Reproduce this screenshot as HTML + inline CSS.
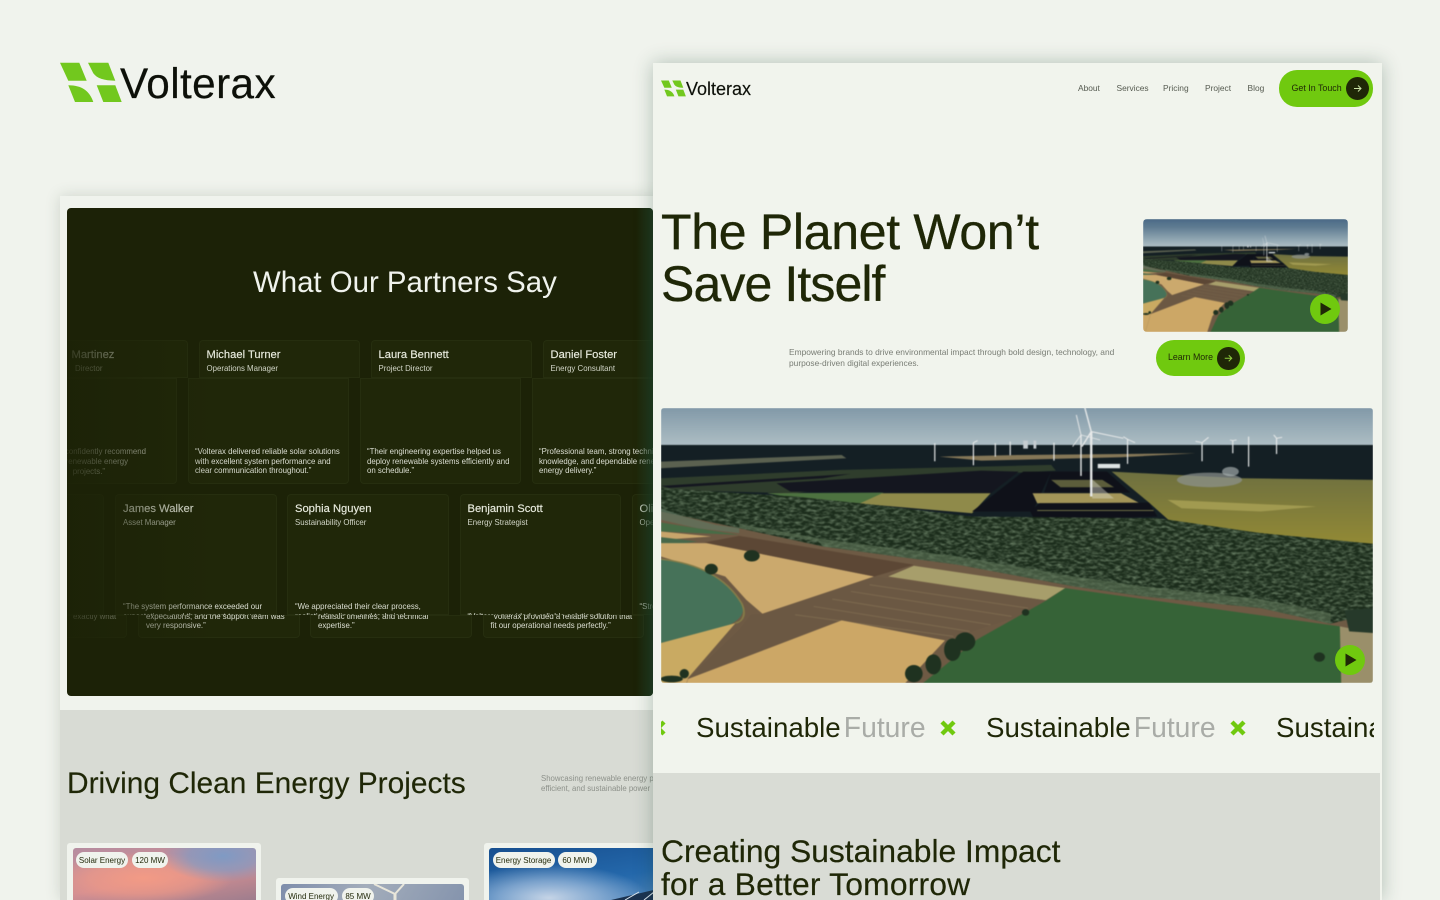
<!DOCTYPE html>
<html lang="en">
<head>
<meta charset="utf-8">
<title>Volterax</title>
<style>
html,body{margin:0;padding:0;width:1440px;height:900px;overflow:hidden;background:#f0f3ed}
body{position:relative;font-family:"Liberation Sans",sans-serif;color:#1f2707}
.a{position:absolute}
.t{position:absolute;white-space:nowrap;line-height:1}
#left{position:absolute;left:60px;top:196px;width:600px;height:704px;background:#f0f3ed;box-shadow:0 0 14px rgba(50,70,50,.18)}
#clip{position:absolute;left:0;top:0;width:1440px;height:900px;clip-path:inset(208px 787px 204px 67px round 4px);background:#1c2207}
.s{position:absolute;background:#202709;box-shadow:inset 0 0 0 1px #262e0f;overflow:hidden}
.u{border-radius:4px 4px 0 0}
.l{border-radius:0 0 4px 4px}
.n{position:absolute;white-space:nowrap;font-size:11.2px;line-height:1;color:#e9ecdf;-webkit-text-stroke:.15px #e9ecdf}
.r{position:absolute;white-space:nowrap;font-size:7.85px;line-height:1;color:#d2d6c8}
.q{position:absolute;white-space:nowrap;font-size:7.85px;line-height:9.7px;color:#dcdfd3}
.q2{position:absolute;white-space:nowrap;font-size:7.85px;line-height:1;color:#dcdfd3}
#grey{position:absolute;left:60px;top:710px;width:600px;height:190px;background:#d8dbd4}
.pc{position:absolute;background:#f0f3ed;border-radius:3px}
.pi{position:absolute;border-radius:3px;overflow:hidden}
.chip{position:absolute;height:16.5px;border-radius:9px;background:#f0f3ed;font-size:8px;line-height:17.5px;text-align:center;color:#1f2707;white-space:nowrap}
#right{position:absolute;left:653px;top:63px;width:729px;height:837px;background:#f1f4ed;box-shadow:0 0 18px rgba(30,70,50,.3)}
.nav{position:absolute;top:84px;font-size:8.4px;line-height:1;color:#555a50;white-space:nowrap}
.btn{position:absolute;background:#70c90f;border-radius:18px}
.dot{position:absolute;border-radius:50%;background:#1f2707}
.play{position:absolute;width:30px;height:30px;border-radius:50%;background:#70c90f}
.mq{position:absolute;font-size:27.7px;line-height:28px;white-space:nowrap;color:#1f2707;word-spacing:-4.6px}
.mq span{color:#a9aca7;font-size:28.3px}
.ph{filter:blur(.45px)}
</style>
</head>
<body>

<!-- big logo -->
<svg class="a" style="left:60px;top:62px" width="62" height="41" viewBox="60 62 62 41">
<g fill="#72c81e">
<path d="M60 62.7H79.3L86.7 80.7H68.3Z"/>
<path d="M88 62.7H108.3L115.3 80.7C104 80.7 97 78.5 93.3 73.3Z"/>
<path d="M68.3 85.3C82 85.3 89.5 91 93.3 102H75Z"/>
<path d="M96.7 85.3H115.3L121.7 102H103.3Z"/>
</g>
</svg>
<div class="t" style="left:120px;top:61px;font-size:42.3px;line-height:46px;letter-spacing:.4px;color:#0d1009;-webkit-text-stroke:.2px #0d1009">Volterax</div>

<!-- left mockup -->
<div id="left"></div>
<div id="clip">
  <div class="t" style="left:253px;top:266px;font-size:29.4px;line-height:33px;color:#f0f3ed">What Our Partners Say</div>

  <!-- row 1 upper -->
  <div class="s u" style="left:27px;top:340px;width:161px;height:38px"><div class="n" style="left:44.5px;top:9.5px">Martinez</div><div class="r" style="left:48px;top:25px">Director</div></div>
  <div class="s u" style="left:199px;top:340px;width:161px;height:38px"><div class="n" style="left:7.5px;top:9.5px">Michael Turner</div><div class="r" style="left:7.5px;top:25px">Operations Manager</div></div>
  <div class="s u" style="left:371px;top:340px;width:161px;height:38px"><div class="n" style="left:7.5px;top:9.5px">Laura Bennett</div><div class="r" style="left:7.5px;top:25px">Project Director</div></div>
  <div class="s u" style="left:543px;top:340px;width:161px;height:38px"><div class="n" style="left:7.5px;top:9.5px">Daniel Foster</div><div class="r" style="left:7.5px;top:25px">Energy Consultant</div></div>
  <!-- row 1 lower -->
  <div class="s l" style="left:16px;top:378px;width:161px;height:106px">
    <div class="q2" style="right:31px;top:70px">confidently recommend</div>
    <div class="q2" style="right:49px;top:80px">renewable energy</div>
    <div class="q2" style="right:72px;top:90px">projects.”</div>
  </div>
  <div class="s l" style="left:188px;top:378px;width:161px;height:106px"><div class="q" style="left:7px;top:69px">“Volterax delivered reliable solar solutions<br>with excellent system performance and<br>clear communication throughout.”</div></div>
  <div class="s l" style="left:360px;top:378px;width:161px;height:106px"><div class="q" style="left:7px;top:69px">“Their engineering expertise helped us<br>deploy renewable systems efficiently and<br>on schedule.”</div></div>
  <div class="s l" style="left:532px;top:378px;width:161px;height:106px"><div class="q" style="left:7px;top:69px">“Professional team, strong technical<br>knowledge, and dependable renewable<br>energy delivery.”</div></div>

  <!-- row 2 upper -->
  <div class="s u" style="left:-57px;top:494px;width:161px;height:121px"></div>
  <div class="s u" style="left:115px;top:494px;width:162px;height:121px"><div class="n" style="left:8px;top:9.5px">James Walker</div><div class="r" style="left:8px;top:25px">Asset Manager</div><div class="q" style="left:8px;top:108px">“The system performance exceeded our<br>expectations, and the support team was<br>very responsive.”</div></div>
  <div class="s u" style="left:287px;top:494px;width:162px;height:121px"><div class="n" style="left:8px;top:9.5px">Sophia Nguyen</div><div class="r" style="left:8px;top:25px">Sustainability Officer</div><div class="q" style="left:8px;top:108px">“We appreciated their clear process,<br>realistic timelines, and technical<br>expertise.”</div></div>
  <div class="s u" style="left:460px;top:494px;width:161px;height:121px"><div class="n" style="left:7.5px;top:9.5px">Benjamin Scott</div><div class="r" style="left:7.5px;top:25px">Energy Strategist</div><div class="q" style="left:7.5px;top:118px">“Volterax provided a reliable solution that<br>fit our operational needs perfectly.”</div></div>
  <div class="s u" style="left:632px;top:494px;width:161px;height:121px"><div class="n" style="left:7.5px;top:9.5px">Oliver Grant</div><div class="r" style="left:7.5px;top:25px">Operations Lead</div><div class="q" style="left:7.5px;top:108px">“Strong project delivery</div></div>
  <!-- row 2 lower -->
  <div class="s l" style="left:-34px;top:615px;width:161px;height:23px"><div class="q2" style="left:107px;top:-2.5px">exactly what</div></div>
  <div class="s l" style="left:138px;top:615px;width:162px;height:23px"><div class="q" style="left:8px;top:-13px">“The system performance exceeded our<br>expectations, and the support team was<br>very responsive.”</div></div>
  <div class="s l" style="left:310px;top:615px;width:162px;height:23px"><div class="q" style="left:8px;top:-13px">“We appreciated their clear process,<br>realistic timelines, and technical<br>expertise.”</div></div>
  <div class="s l" style="left:483px;top:615px;width:161px;height:23px"><div class="q" style="left:7.5px;top:-3.3px">“Volterax provided a reliable solution that<br>fit our operational needs perfectly.”</div></div>

  <!-- fades -->
  <div class="a" style="left:67px;top:330px;width:150px;height:320px;background:linear-gradient(90deg,rgba(28,34,7,.9),rgba(28,34,7,.55) 40%,rgba(28,34,7,0))"></div>
  <div class="a" style="left:636px;top:208px;width:18px;height:488px;background:linear-gradient(90deg,rgba(28,44,20,0),rgba(28,56,32,.85))"></div>
</div>

<!-- grey section -->
<div id="grey"></div>
<div class="t" style="left:67px;top:766px;font-size:29.9px;line-height:35px;color:#1f2707;-webkit-text-stroke:.15px #1f2707">Driving Clean Energy Projects</div>
<div class="t" style="left:541px;top:773.5px;font-size:7.8px;line-height:10px;color:#8d918a">Showcasing renewable energy projects<br>efficient, and sustainable power</div>

<div class="pc" style="left:67px;top:843px;width:194px;height:57px;border-radius:3px 3px 0 0"></div>
<div class="pi" style="left:72.6px;top:848px;width:183px;height:52px;border-radius:3px 3px 0 0;background:
  radial-gradient(ellipse 62px 26px at 150px 8px,#7f9ac4 0,rgba(127,154,196,.7) 55%,rgba(127,154,196,0) 100%),
  radial-gradient(ellipse 90px 26px at 70px 30px,#f29a85 0,rgba(242,154,133,.6) 60%,rgba(242,154,133,0) 100%),
  linear-gradient(170deg,#b58da0,#d48f92 55%,#9e7d8d)"></div>
<div class="chip" style="left:76px;top:851.7px;width:52px">Solar Energy</div>
<div class="chip" style="left:132px;top:851.7px;width:36px">120 MW</div>

<div class="pc" style="left:275.5px;top:878px;width:193px;height:22px;border-radius:3px 3px 0 0"></div>
<div class="pi" style="left:281px;top:884px;width:183px;height:16px;border-radius:3px 3px 0 0;background:linear-gradient(120deg,#7d8dab,#a3adbb 45%,#8594ad)">
  <svg class="a" style="left:0;top:0" width="183" height="16" viewBox="0 0 183 16"><g stroke="#e8e6da" stroke-width="2" fill="none"><path d="M114 10L93 0"/><path d="M114 10L123 0"/><path d="M114 10V30" stroke-width="3"/></g></svg>
</div>
<div class="chip" style="left:284.6px;top:887.7px;width:53px">Wind Energy</div>
<div class="chip" style="left:342px;top:887.7px;width:32px">85 MW</div>

<div class="pc" style="left:483.6px;top:843px;width:194px;height:57px;border-radius:3px 3px 0 0"></div>
<div class="pi" style="left:489px;top:848px;width:190px;height:52px;border-radius:3px 3px 0 0;background:
  radial-gradient(ellipse 100px 34px at 60px 50px,#c5d4e6 0,rgba(170,195,224,.65) 50%,rgba(170,195,224,0) 100%),
  linear-gradient(170deg,#174f8f,#2468ab 60%,#4f86bb)">
  <svg class="a" style="left:0;top:0" width="190" height="52" viewBox="0 0 190 52"><path d="M122 52L190 36V52Z" fill="#1b3350"/><path d="M150 44L136 52M170 40L155 52" stroke="#dce6ee" stroke-width="1"/></svg>
</div>
<div class="chip" style="left:492.5px;top:851.7px;width:62px">Energy Storage</div>
<div class="chip" style="left:558px;top:851.7px;width:38.5px">60 MWh</div>

<!-- right mockup -->
<div id="right"></div>
<svg class="a" style="left:661px;top:80px" width="25" height="17" viewBox="60 62 62 41">
<g fill="#72c81e">
<path d="M60 62.7H79.3L86.7 80.7H68.3Z"/>
<path d="M88 62.7H108.3L115.3 80.7C104 80.7 97 78.5 93.3 73.3Z"/>
<path d="M68.3 85.3C82 85.3 89.5 91 93.3 102H75Z"/>
<path d="M96.7 85.3H115.3L121.7 102H103.3Z"/>
</g>
</svg>
<div class="t" style="left:686px;top:78.5px;font-size:18px;line-height:20px;color:#0d1009;-webkit-text-stroke:.15px #0d1009">Volterax</div>

<div class="nav" style="left:1078px">About</div>
<div class="nav" style="left:1116.5px">Services</div>
<div class="nav" style="left:1163px">Pricing</div>
<div class="nav" style="left:1205px">Project</div>
<div class="nav" style="left:1247.5px">Blog</div>
<div class="btn" style="left:1279px;top:70px;width:94px;height:36.5px"></div>
<div class="t" style="left:1291.5px;top:84.3px;font-size:8.9px;color:#1f2707">Get In Touch</div>
<div class="dot" style="left:1346px;top:77px;width:23px;height:23px"></div>
<svg class="a" style="left:1346px;top:77px" width="23" height="23" viewBox="-11.5 -11.5 23 23"><path d="M-3.5 0H3.5M0.5-3L3.5 0L0.5 3" fill="none" stroke="#c9e2a5" stroke-width="1"/></svg>

<div class="t" style="left:661px;top:206px;font-size:50px;line-height:52px;letter-spacing:-.3px;color:#1f2707;-webkit-text-stroke:.35px #1f2707">The Planet Won’t<br><span style="letter-spacing:-.9px">Save Itself</span></div>

<div class="a" style="left:1143px;top:219px;width:205px;height:113px;border-radius:4px;overflow:hidden">
<svg class="ph" width="205" height="113" viewBox="12 -151.5 1530 1177" preserveAspectRatio="none" style="display:block"><use href="#photo"/></svg>
</div>
<div class="play" style="left:1310px;top:294px"></div>
<svg class="a" style="left:1310px;top:294px" width="30" height="30" viewBox="0 0 30 30"><path d="M10.5 8.5L21.5 15L10.5 21.5Z" fill="#1f2707"/></svg>

<div class="t" style="left:789px;top:346.5px;font-size:8.39px;line-height:11px;color:#797d75">Empowering brands to drive environmental impact through bold design, technology, and<br>purpose-driven digital experiences.</div>

<div class="btn" style="left:1156px;top:340px;width:88.6px;height:35.5px"></div>
<div class="t" style="left:1168px;top:353.3px;font-size:8.8px;color:#1f2707">Learn More</div>
<div class="dot" style="left:1217px;top:347px;width:22.5px;height:22.5px"></div>
<svg class="a" style="left:1217px;top:347px" width="22.5" height="22.5" viewBox="-11.25 -11.25 22.5 22.5"><path d="M-3.5 0H3.5M0.5-3L3.5 0L0.5 3" fill="none" stroke="#8fce3d" stroke-width="1"/></svg>

<!-- main photo -->
<div class="a" style="left:660.6px;top:408px;width:712.4px;height:275px;border-radius:3px;overflow:hidden">
<svg class="ph" width="712.4" height="275" viewBox="12 24 1530 826" preserveAspectRatio="none" style="display:block">
<defs>
<linearGradient id="sky" x1="0" y1="0" x2="0" y2="1"><stop offset="0" stop-color="#3f5f80"/><stop offset=".4" stop-color="#5f7c92"/><stop offset=".8" stop-color="#94a9b4"/><stop offset="1" stop-color="#aebec4"/></linearGradient>
<linearGradient id="yf" x1="0" y1="0" x2="0" y2="1"><stop offset="0" stop-color="#6e7040"/><stop offset="1" stop-color="#938a35"/></linearGradient>
<filter id="tex" x="0" y="0" width="100%" height="100%"><feTurbulence type="fractalNoise" baseFrequency=".08 .14" numOctaves="3" seed="7"/><feColorMatrix values="0 0 0 0 .30  0 0 0 0 .42  0 0 0 0 .27  1.3 0 0 0 -.5"/></filter>
<clipPath id="trees"><path d="M12 265L300 290L470 315L680 350L1080 355L1300 400L1542 432V640L1450 672L1300 625L1050 590L900 560L650 495L360 440L180 385L12 335Z"/></clipPath>
<g id="photo">
<rect x="0" y="-200" width="1560" height="338" fill="url(#sky)"/>
<rect x="0" y="135" width="1560" height="1100" fill="#141f24"/>
<path d="M12 185L400 165L410 175L12 205Z" fill="#5b6150"/>
<path d="M610 170L780 165L1160 160L1000 172L700 182Z" fill="#857757"/>
<path d="M12 235L400 210L850 195L860 212L500 240L300 280L12 270Z" fill="#2f3d2c"/>
<path d="M12 258L420 222L360 235L30 264Z" fill="#14161f"/>
<path d="M260 250L700 212L780 215L720 280L610 278L290 275Z" fill="#14161f"/>
<path d="M240 280L720 280L680 340L470 315Z" fill="#8f8a4a"/>
<path d="M240 280L490 278L440 310L300 295Z" fill="#4d7240"/>
<path d="M790 215L850 215L810 335H680Z" fill="#0f1119"/>
<path d="M850 215H970L1020 278H835Z" fill="#0f1119"/>
<path d="M850 240H960L985 262H870Z" fill="#5c5d3b"/>
<path d="M810 280H1000L1040 310L820 310Z" fill="#a39558"/>
<path d="M825 310L1060 308L1078 350L815 362L805 335Z" fill="#0f1119"/>
<path d="M820 332H1070" stroke="#6c6c44" stroke-width="3"/>
<path d="M980 215L1260 235L1542 240V435L1300 400L1110 370L1060 308Z" fill="url(#yf)"/>
<path d="M1100 300L1420 320L1300 335L1130 325Z" fill="#a19a50"/>
<ellipse cx="1190" cy="240" rx="70" ry="22" fill="#8d9390" opacity=".7"/>
<ellipse cx="1235" cy="215" rx="18" ry="14" fill="#aab4b4" opacity=".65"/>
<!-- ground base -->
<path d="M12 330L360 430L900 550L1542 640V1250H-20Z" fill="#6e5a44"/>
<path d="M12 265L300 290L470 315L680 350L1080 355L1300 400L1542 432V640L1450 672L1300 625L1050 590L900 560L650 495L360 440L180 385L12 335Z" fill="#1b2c1b"/>
<g clip-path="url(#trees)"><rect x="0" y="250" width="1560" height="440" filter="url(#tex)"/></g>
<path d="M180 385L350 425L360 440L650 495L900 560L1050 590L1300 625L1450 672L1450 640L1300 598L1050 560L900 530L650 470L360 418L180 372Z" fill="#5f7558" opacity=".6"/>
<path d="M12 325L60 350L130 375L180 385V400L90 385L12 360Z" fill="#5e7560" opacity=".7"/>
<path d="M12 368L180 405L12 395Z" fill="#476c46"/>
<path d="M12 395L120 410L12 420Z" fill="#c8a56b"/>
<path d="M12 412L90 425L12 440Z" fill="#47684a"/>
<path d="M12 430L110 430L470 530L230 642L195 600L150 530L12 470Z" fill="#cba96d"/>
<path d="M105 428L180 408L555 495L470 530Z" fill="#5c4735"/>
<path d="M500 530L555 498L880 565L838 602Z" fill="#a79e6b"/>
<path d="M470 530L840 602L780 650L620 722L400 662L70 838L180 690L205 645L230 642Z" fill="#6b5843"/>
<g stroke="#8b7758" stroke-width="3" opacity=".55"><path d="M460 555L800 625"/><path d="M420 575L765 650"/><path d="M380 598L720 675"/><path d="M340 620L675 695"/><path d="M300 645L640 710"/></g>
<path d="M400 662L622 722L530 860L440 1250H-20L70 838Z" fill="#cca766"/>
<path d="M12 478C90 490 150 530 185 610C195 640 180 665 150 680L12 730Z" fill="#467259"/>
<path d="M12 730L172 670L70 835L12 850Z" fill="#c9aa62"/>
<path d="M12 850L70 835L-20 1250H12Z" fill="#cca766"/>
<path d="M12 478C90 490 150 530 185 610C195 640 190 665 172 670" fill="none" stroke="#857c48" stroke-width="4"/>
<path d="M880 565L1470 680L1480 1250H440L575 850L690 720L840 602Z" fill="#366337"/>
<path d="M1470 680L1542 700V1250H1480Z" fill="#9a8f6a"/>
<path d="M1480 632L1542 625V700L1490 695Z" fill="#26392a"/>
<g fill="#1f3220"><ellipse cx="555" cy="822" rx="19" ry="26"/><ellipse cx="597" cy="794" rx="17" ry="30"/><ellipse cx="638" cy="750" rx="18" ry="34"/><ellipse cx="665" cy="726" rx="22" ry="28"/><ellipse cx="207" cy="468" rx="17" ry="17"/><ellipse cx="120" cy="508" rx="14" ry="16"/><ellipse cx="35" cy="838" rx="24" ry="10"/><ellipse cx="62" cy="822" rx="10" ry="14"/><ellipse cx="795" cy="638" rx="8" ry="10"/><ellipse cx="1426" cy="772" rx="12" ry="14"/></g>
<g stroke="#e8eaea" fill="none">
<path d="M936 290V95" stroke-width="5"/>
<path d="M936 95L922 22M936 95L1005 115M936 95L916 140" stroke-width="3"/>
<path d="M914 228V105" stroke-width="3"/>
<path d="M914 105L904 45M914 105L955 120M914 105L896 140" stroke-width="2"/>
<path d="M600 184V130M683 196V128M683 128L692 122M856 182V128M1014 192V118M1014 118L1005 110M1014 118L1030 128M1174 184V128M1174 128L1188 112M1174 128L1160 124M1274 200V110M1334 162V115M1334 115L1328 105M1334 115L1346 112M1240 160V122M1240 122L1234 120M1240 122L1248 120M762 166V125M730 170V130" stroke-width="2.5"/>
</g>
<path d="M790 146V122H800V146ZM812 146V122H818V146Z" fill="#c6ccd0"/>
<path d="M950 192H998V205H950Z" fill="#dfe4e4"/>
<path d="M938 238L985 296H938Z" fill="#dad8c8" opacity=".45"/>
</g>
</defs>
<use href="#photo"/>
</svg>
</div>
<div class="play" style="left:1335px;top:645px"></div>
<svg class="a" style="left:1335px;top:645px" width="30" height="30" viewBox="0 0 30 30"><path d="M10.5 8.5L21.5 15L10.5 21.5Z" fill="#1f2707"/></svg>

<!-- marquee -->
<div class="a" style="left:661px;top:700px;width:713px;height:60px;overflow:hidden">
  <div class="mq" style="left:35px;top:13px">Sustainable <span>Future</span></div>
  <div class="mq" style="left:325px;top:13px">Sustainable <span>Future</span></div>
  <div class="mq" style="left:615px;top:13px">Sustainable <span>Future</span></div>
  <svg class="a" style="left:0;top:0" width="713" height="60" viewBox="0 0 713 60"><g fill="none" stroke="#70c90f" stroke-width="4.4"><path d="M-9 22L3 34M3 22L-9 34"/><path d="M281 22L293 34M293 22L281 34"/><path d="M571 22L583 34M583 22L571 34"/></g></svg>
</div>

<!-- lower grey -->
<div class="a" style="left:653px;top:773px;width:727px;height:127px;background:#d9dcd5"></div>
<div class="t" style="left:661px;top:835px;font-size:31.8px;line-height:33px;color:#1f2707;-webkit-text-stroke:.2px #1f2707">Creating Sustainable Impact<br><span style="letter-spacing:.2px">for a Better Tomorrow</span></div>

</body>
</html>
